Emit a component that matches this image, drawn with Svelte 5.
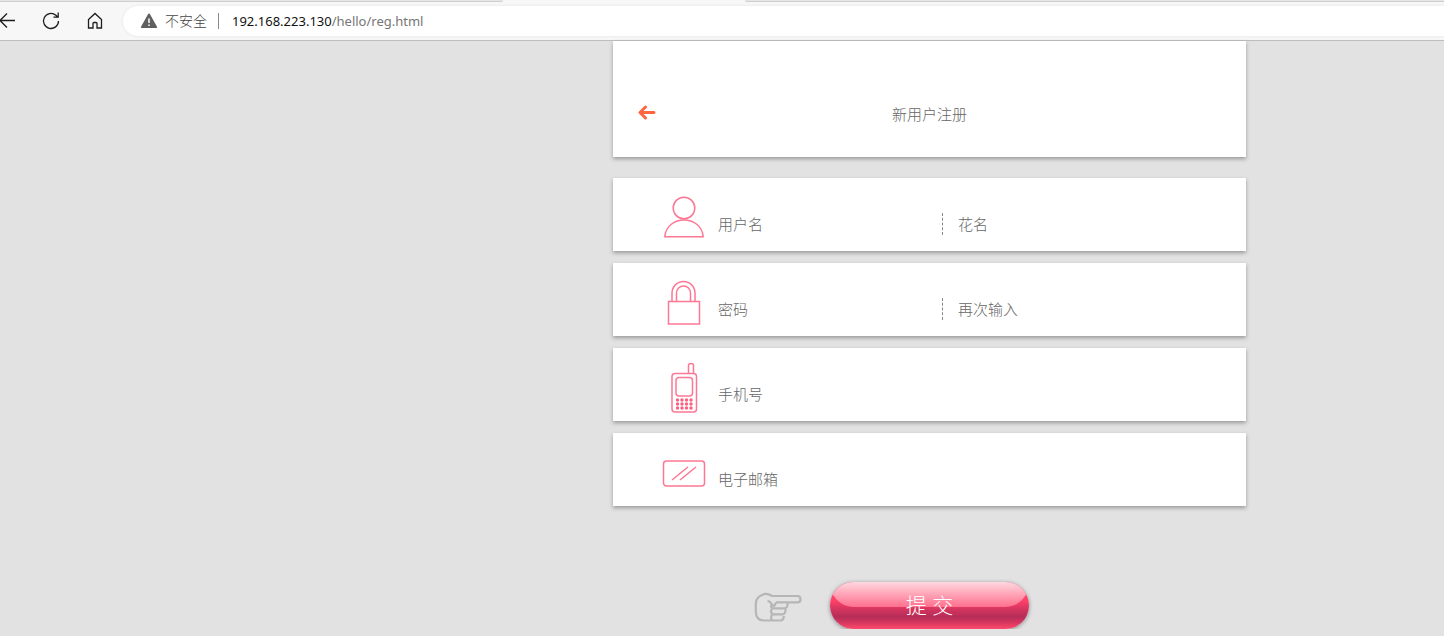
<script>
  const rows = [
    { icon: 'user', fields: [{ name: 'username', hint: '用户名', type: 'text' }, { name: 'nickname', hint: '花名', type: 'text' }] },
    { icon: 'lock', fields: [{ name: 'password', hint: '密码', type: 'password' }, { name: 'confirm', hint: '再次输入', type: 'password' }] },
    { icon: 'phone', fields: [{ name: 'phone', hint: '手机号', type: 'tel' }] },
    { icon: 'mail', fields: [{ name: 'email', hint: '电子邮箱', type: 'email' }] }
  ];
</script>

<div class="tabs"><span class="first"></span><span class="active"></span><span class="rest"></span></div>
<nav class="toolbar">
  <button class="tool" aria-label="后退">
    <svg width="20" height="20" viewBox="0 0 20 20"><path d="M18 9.500H3M10 2.500l-7 7 7 7" /></svg>
  </button>
  <button class="tool" aria-label="刷新">
    <svg width="20" height="20" viewBox="0 0 20 20"><path d="M17.500 10a7.500 7.500 0 1 1-2.600-5.700l1.800 1.600M17.200 1.500v4.600h-4.700" /></svg>
  </button>
  <button class="tool" aria-label="主页">
    <svg width="20" height="20" viewBox="0 0 20 20"><path d="M3.500 8.500L10 2.500 16.500 8.500v8.500h-4.500v-4.500q0-1-1-1h-2q-1 0-1 1v4.500h-4.500z" /></svg>
  </button>
  <div class="address">
    <svg class="warn" width="18" height="16" viewBox="0 0 18 16"><path d="M9 .5q.7 0 1 .7l7 12.500q.6 1.300-.8 1.300H1.800q-1.400 0-.8-1.300l7-12.500q.3-.7 1-.7z" fill="#5f5f5f" /><path d="M9 5.500v4.500M9 11.500v1.500" stroke="#fff" stroke-width="1.500" /></svg>
    <span class="unsafe">不安全</span>
    <span class="url"><b>192.168.223.130</b>/hello/reg.html</span>
  </div>
</nav>

<main>
  <form>
    <header>
      <a href="#back" aria-label="返回">
        <svg width="20" height="18" viewBox="0 0 20 18"><path d="M17 7.500H4M8.500 2L3 7.500 8.500 13" /></svg>
      </a>
      <h1>新用户注册</h1>
    </header>

    {#each rows as row}
      <div class="row">
        <svg class="icon" width="48" height="54" viewBox="0 0 48 54">
          {#if row.icon === 'user'}
            <circle cx="24" cy="17" r="10.800" />
            <path d="M4.800 45.800C6.500 23.500 41.500 23.500 43.200 45.800z" />
          {:else if row.icon === 'lock'}
            <path d="M12 25.500h-3.500v22.500h31v-22.500H35V17a11.500 11.500 0 0 0-23 0zM16.500 25.500V17a7 7 0 0 1 14 0v8.500z" />
            <path d="M12 25.500h4.500M30.500 25.500H35" />
          {:else if row.icon === 'phone'}
            <rect x="12" y="12.500" width="24.500" height="38.500" rx="3" />
            <path d="M28.500 12V4.500q0-2 2.500-2t2.500 2V12" />
            <rect x="16" y="16.500" width="16.500" height="18.500" rx="3" />
            {#each [39, 43, 47] as y}
              {#each [17.5, 22, 26.5, 31] as x}
                <circle class="key" cx={x} cy={y} r="1.700" />
              {/each}
            {/each}
          {:else}
            <rect x="3.500" y="15" width="41" height="25" rx="3" />
            <path d="M12 34L28 21M20 34L36 21" />
          {/if}
        </svg>
        {#each row.fields as field}
          <input type={field.type} name={field.name} placeholder={field.hint} aria-label={field.hint} />
        {/each}
      </div>
    {/each}

    <div class="actions">
      <svg class="hand" width="48" height="32" viewBox="0 0 48 32">
        <path d="M18 6Q12.500 2.500 8 5Q1.800 7.500 1.800 14v7q0 9.500 8 9.500h17.500q2.500-.8 2.500-4.500" />
        <path d="M18 6h25.500q3 0 3 3.200t-3 3.200H22" />
        <path d="M13.500 11q2.500 0 4.500 3.500t4-2" />
        <path d="M33.500 12.500q.5 5.500-3 5.800H19q-3.500-1.500-1-4M31.500 18.500q.5 5.500-3 5.800H18.500q-3-3 0-6M18.500 24.300q-3 3.200 0 6" />
      </svg>
      <button class="submit" type="button"><span>提 交</span></button>
    </div>
  </form>
</main>

<style>
  :global(body) {
    background: #e2e2e2;
    font-family: "Noto Sans", "Noto Sans CJK SC", sans-serif;
    overflow: hidden;
  }
  svg { display: block; flex: none; fill: none; }
  button { border: 0; padding: 0; background: none; }
  .tabs { display: grid; grid-template-columns: 503fr 242fr 699fr; height: 2px; background: #f7f7f7; }
  .first, .rest { background: #e6e6e6; border-bottom: 1px solid #cfcfcf; }
  .first { border-bottom-right-radius: 2px; }
  .rest { border-bottom-left-radius: 2px; }
  .toolbar {
    display: flex;
    align-items: center;
    gap: 24px;
    height: 38px;
    padding-left: 41px;
    background: #f7f7f7;
    border-bottom: 1px solid #bdbdbd;
  }
  .tool:first-child { margin-left: -44px; }
  .tool svg { stroke: #1d1d1d; stroke-width: 1.3; }
  .address {
    flex: 1;
    display: flex;
    align-items: center;
    height: 30px;
    margin-left: -6px;
    padding-left: 17px;
    background: #fff;
    border-radius: 15px 0 0 15px;
    box-shadow: 0 0 3px #e2e2e2;
    font-size: 13px;
    color: #767676;
  }
  .unsafe { margin-left: 7px; padding-right: 11px; font-size: 14px; font-weight: 300; line-height: 16px; border-right: 1px solid #8b8b8b; color: #444; }
  .url { margin-left: 13px; }
  .url b { font-weight: 400; color: #111; }
  main { display: grid; grid-template-columns: 613fr 633fr 198fr; }
  form { grid-column: 2; }
  header {
    display: grid;
    grid-template-columns: 1fr auto 1fr;
    align-items: center;
    height: 116px;
    box-sizing: border-box;
    padding: 29px 24px 0;
    margin-bottom: 21px;
    background: #fff;
    box-shadow: 0 2px 4px #999;
  }
  header a svg { stroke: #ff6541; stroke-width: 3; stroke-linecap: round; stroke-linejoin: round; }
  h1 { margin: 0; font-size: 15px; font-weight: 300; color: #666; }
  .row {
    display: flex;
    height: 73px;
    margin-bottom: 12px;
    padding-left: 47px;
    background: #fff;
    box-shadow: 0 2px 4px #999;
  }
  .icon { margin: 13px 10px 0 0; stroke: #fd7894; stroke-width: 1.5; }
  .key { fill: #fb6080; stroke: none; }
  input {
    width: 225px;
    height: 22px;
    box-sizing: border-box;
    margin: 35px 0 0;
    padding: 0;
    border: 0;
    outline: 0;
    background: none;
    font-family: inherit;
    font-size: 15px;
    font-weight: 300;
    color: #444;
  }
  input::placeholder { color: #666; opacity: 1; }
  input:not(:last-child) { border-right: 1px dashed #888; }
  input + input { margin-left: 15px; }
  .actions { display: flex; align-items: center; gap: 28px; margin-top: 76px; padding-left: 141px; }
  .hand { stroke: #b6b6b6; stroke-width: 2.2; stroke-linejoin: round; }
  .submit {
    position: relative;
    overflow: hidden;
    width: 199px;
    height: 47px;
    padding-bottom: 3px;
    border-radius: 24px;
    background: linear-gradient(#ff4c70 0%, #ff4068 40%, #d83661 56%, #b52d57 74%, #d5365f 86%, #ff4a6c 100%);
    box-shadow: 0 1px 4px #888;
    color: #fff;
    font-family: inherit;
    font-size: 21px;
    font-weight: 300;
  }
  .submit::before {
    content: "";
    position: absolute;
    inset: 0 0 22px;
    border-radius: 0 0 24px 24px;
    background: linear-gradient(#ffd8e0, #ff6f8d);
  }
  .submit span { position: relative; }
</style>
